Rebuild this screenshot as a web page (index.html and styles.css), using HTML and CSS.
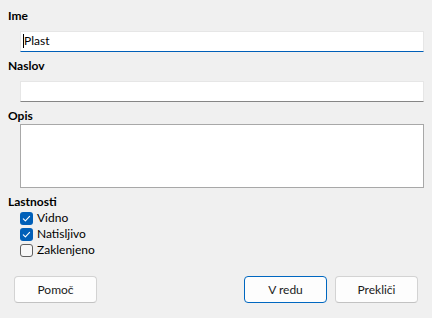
FILE: index.html
```html
<!DOCTYPE html>
<html>
<head>
<meta charset="utf-8">
<link rel="stylesheet" href="styles.css">
</head>
<body>
<div class="dialog">
  <div class="form">
    <div class="label">Ime</div>
    <div class="field focused"><span class="caret"></span><span class="value">Plast</span></div>
    <div class="label">Naslov</div>
    <div class="field"></div>
    <div class="label label-tight">Opis</div>
    <div class="area"></div>
    <div class="label label-props">Lastnosti</div>
    <div class="checks">
      <div class="check-row">
        <span class="box checked"><svg viewBox="0 0 13 13" width="13" height="13"><path d="M3.3 6.8 L5.4 8.8 L9.6 4.4" fill="none" stroke="#fff" stroke-width="1.1" stroke-linecap="round" stroke-linejoin="round"/></svg></span>
        <span class="check-text">Vidno</span>
      </div>
      <div class="check-row">
        <span class="box checked"><svg viewBox="0 0 13 13" width="13" height="13"><path d="M3.3 6.8 L5.4 8.8 L9.6 4.4" fill="none" stroke="#fff" stroke-width="1.1" stroke-linecap="round" stroke-linejoin="round"/></svg></span>
        <span class="check-text">Natisljivo</span>
      </div>
      <div class="check-row">
        <span class="box"></span>
        <span class="check-text">Zaklenjeno</span>
      </div>
    </div>
  </div>
  <div class="buttons">
    <div class="btn">Pomoč</div>
    <div class="right-buttons">
      <div class="btn default">V redu</div>
      <div class="btn">Prekliči</div>
    </div>
  </div>
</div>
</body>
</html>
```
FILE: styles.css
```css
html, body {
  margin: 0;
  padding: 0;
  background: #f0f0f0;
}
body {
  width: 432px;
  height: 318px;
  overflow: hidden;
  font-family: Lato, "Noto Sans", sans-serif;
  font-size: 12px;
  line-height: 16px;
  color: #000;
}
.dialog {
  padding-top: 8px;
}
.form {
  padding: 0 8px;
  display: flex;
  flex-direction: column;
}
.label {
  font-weight: 700;
  height: 16px;
  margin-bottom: 7px;
}
.label-tight {
  margin-bottom: 0;
}
.label-props {
  margin-bottom: 0;
}
.field {
  box-sizing: border-box;
  margin-left: 12px;
  height: 21px;
  background: #fff;
  border: 1px solid #e6e6e6;
  border-bottom-color: #868686;
  margin-bottom: 6px;
  display: flex;
  align-items: center;
  padding: 0 0 1px 2px;
}
.field.focused {
  border-bottom-color: #005fb8;
}
.caret {
  display: inline-block;
  width: 1px;
  height: 14px;
  background: #000;
}
.value {
  line-height: 16px;
}
.area {
  box-sizing: border-box;
  margin-left: 12px;
  height: 64px;
  background: #fff;
  border: 1px solid #a8a8a8;
  margin-bottom: 6px;
}
.checks {
  display: flex;
  flex-direction: column;
  padding-left: 12px;
}
.check-row {
  height: 16px;
  display: flex;
  align-items: center;
  gap: 4px;
}
.box {
  box-sizing: border-box;
  width: 13px;
  height: 13px;
  border-radius: 3px;
  border: 1px solid #5f5f5f;
  background: #f7f7f7;
  display: flex;
}
.box.checked {
  border: none;
  background: #005fb8;
}
.box svg {
  display: block;
}
.buttons {
  margin-top: 18px;
  padding: 0 14px;
  display: flex;
  justify-content: space-between;
}
.right-buttons {
  display: flex;
  gap: 8px;
}
.btn {
  box-sizing: border-box;
  width: 83px;
  height: 27px;
  border: 1px solid #d3d3d3;
  border-bottom-color: #c2c2c2;
  border-radius: 4px;
  background: #fdfdfd;
  display: flex;
  align-items: center;
  justify-content: center;
  color: #1b1b1b;
}
.btn.default {
  border-color: #0067c0;
}
```
